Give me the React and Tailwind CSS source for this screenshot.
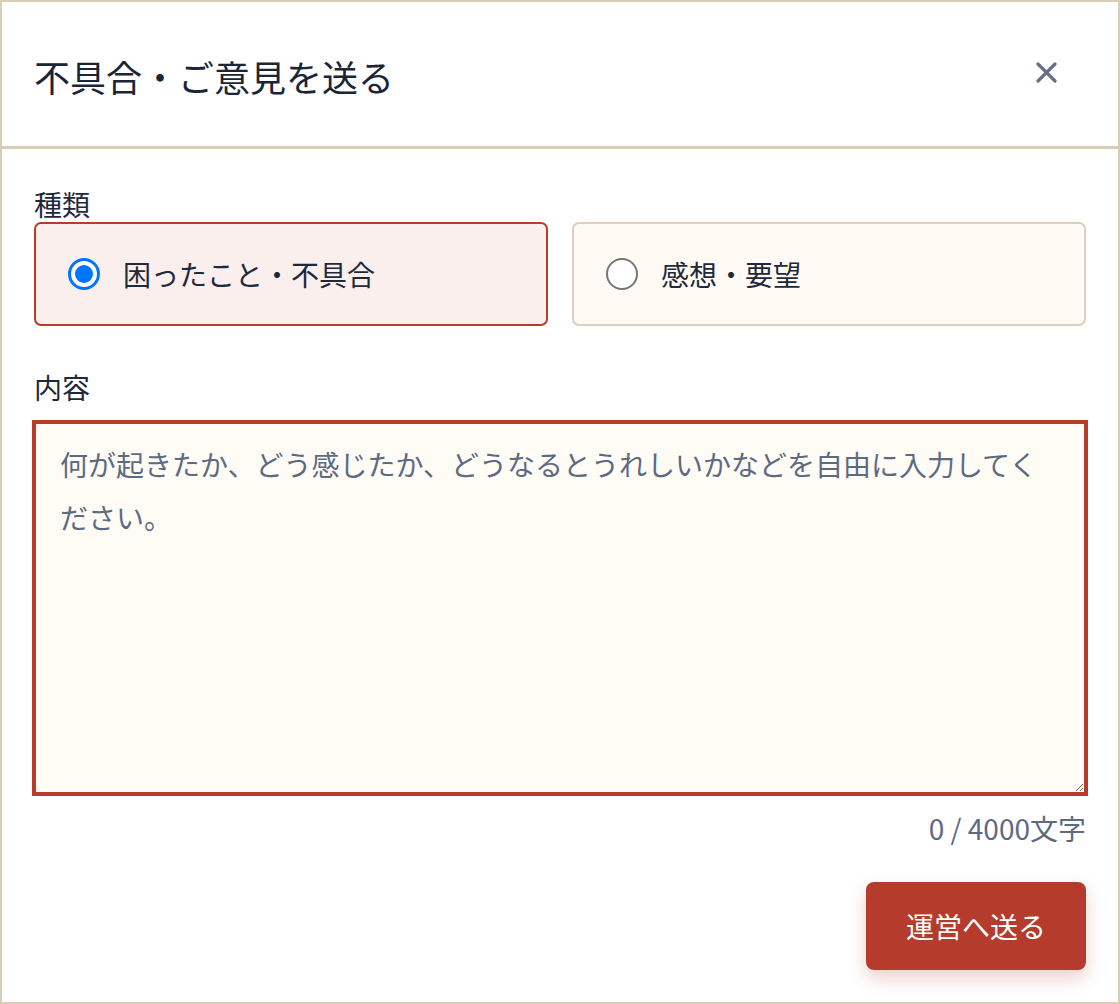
import React from "react";

export default function App() {
  return (
    <div className="w-[1120px] h-[1004px] border-2 border-[#d9cdb8] bg-white flex flex-col font-['Noto_Sans_CJK_JP','Noto_Sans',sans-serif] text-[#1e293b]">
      <header className="h-[147px] shrink-0 border-b-[3px] border-[#d9cdb8] flex items-center justify-between pl-[32px] pr-[60px]">
        <h1 className="text-[36px] leading-[44px] font-normal mt-[4px] text-[#1b2538]">不具合・ご意見を送る</h1>
        <button className="w-[24px] h-[24px] flex items-center justify-center text-[#667085] -mt-[4px]" aria-label="閉じる">
          <svg width="21" height="21" viewBox="0 0 21 21" fill="none" stroke="currentColor" strokeWidth="3.2" strokeLinecap="round">
            <line x1="2" y1="2" x2="19" y2="19" />
            <line x1="19" y1="2" x2="2" y2="19" />
          </svg>
        </button>
      </header>

      <main className="flex-1 flex flex-col px-[32px] pt-[37px] pb-[32px]">
        <div className="text-[28px] leading-[36px]">種類</div>
        <div className="grid grid-cols-2 gap-[24px]">
          <label className="h-[104px] rounded-[7px] border-2 border-[#b83b2b] bg-[#faefec] flex items-center pl-[32px]">
            <span className="w-[32px] h-[32px] rounded-full border-[3px] border-[#0075ff] bg-white p-[4px] flex">
              <span className="flex-1 rounded-full bg-[#0075ff]" />
            </span>
            <span className="ml-[23px] text-[28px] leading-[36px]">困ったこと・不具合</span>
          </label>
          <label className="h-[104px] rounded-[7px] border-2 border-[#dcd0bc] bg-[#fffbf4] flex items-center pl-[32px]">
            <span className="w-[32px] h-[32px] rounded-full border-2 border-[#767676] bg-white" />
            <span className="ml-[23px] text-[28px] leading-[36px]">感想・要望</span>
          </label>
        </div>

        <div className="mt-[43px] text-[28px] leading-[36px]">内容</div>
        <textarea
          className="mt-[17px] h-[372px] w-full border-2 border-[#b83b2b] ring-2 ring-[#b83b2b] bg-[#fffbf5] px-[24px] py-[14px] text-[28px] leading-[53px] text-[#1e293b] placeholder:text-[#5c6b82] outline-none resize-y font-['Noto_Sans_CJK_JP','Noto_Sans',sans-serif]"
          placeholder="何が起きたか、どう感じたか、どうなるとうれしいかなどを自由に入力してください。"
        />
        <div className="mt-[16px] text-right text-[28px] leading-[36px] text-[#5c6b82]">0 / 4000文字</div>

        <div className="mt-[36px] flex justify-end">
          <button className="w-[220px] h-[88px] rounded-[8px] bg-[#b53c2c] text-white text-[28px] leading-[36px] shadow-[0_8px_18px_rgba(181,60,44,0.25)]">
            運営へ送る
          </button>
        </div>
      </main>
    </div>
  );
}
